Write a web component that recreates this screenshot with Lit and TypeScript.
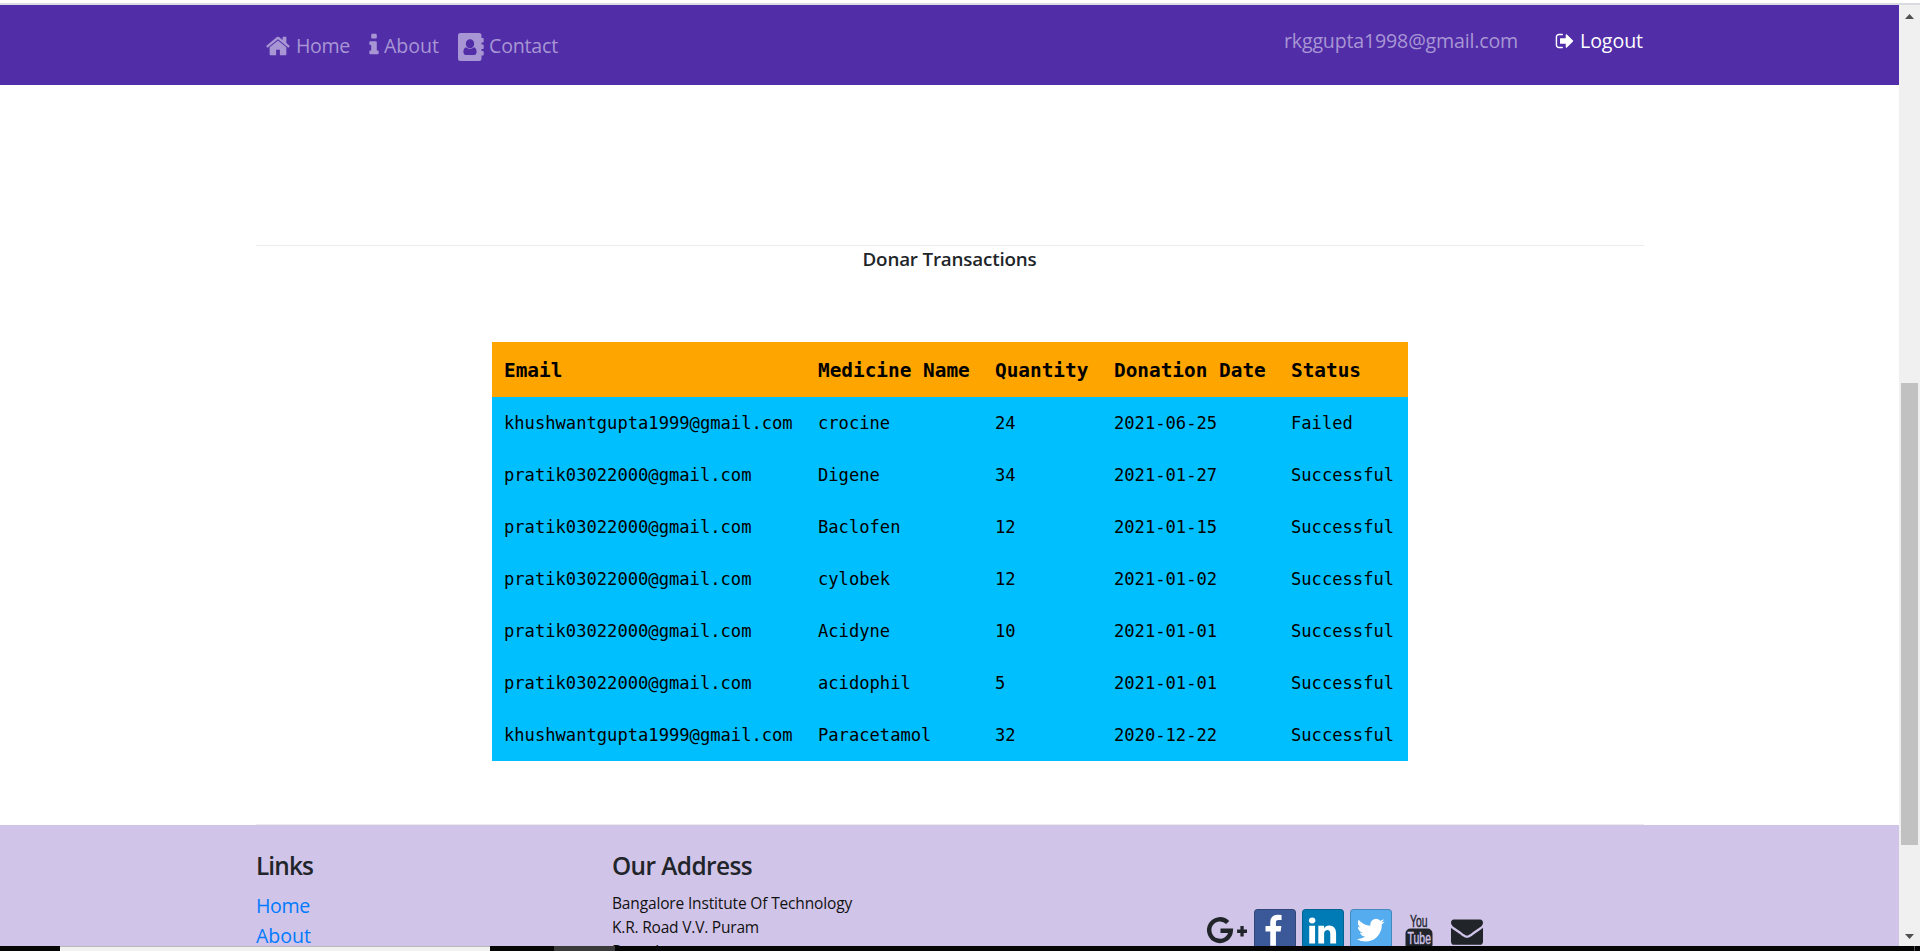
import { LitElement, html, css, svg } from "lit";
import { customElement, property } from "lit/decorators.js";

const HOME = "M1472 992v480q0 26-19 45t-45 19h-384v-384h-256v384h-384q-26 0-45-19t-19-45v-480q0-1 .5-3t.5-3l575-474 575 474q1 2 1 6zm223-69l-62 74q-8 9-21 11h-3q-13 0-21-7l-692-577-692 577q-12 8-24 7-13-2-21-11l-62-74q-8-10-7-23.5t11-21.5l719-599q32-26 76-26t76 26l244 204v-195q0-14 9-23t23-9h192q14 0 23 9t9 23v408l219 182q10 8 11 21.5t-7 23.5z";
const INFO = "M1216 1344v128q0 26-19 45t-45 19h-512q-26 0-45-19t-19-45v-128q0-26 19-45t45-19h64v-384h-64q-26 0-45-19t-19-45v-128q0-26 19-45t45-19h384q26 0 45 19t19 45v576h64q26 0 45 19t19 45zm-128-1152v192q0 26-19 45t-45 19h-256q-26 0-45-19t-19-45v-192q0-26 19-45t45-19h256q26 0 45 19t19 45z";
const SIGN_OUT = "M704 1440q0 4 1 20t.5 26.5-3 23.5-10 19.5-20.5 6.5h-320q-119 0-203.5-84.5t-84.5-203.5v-704q0-119 84.5-203.5t203.5-84.5h320q13 0 22.5 9.5t9.5 22.5q0 4 1 20t.5 26.5-3 23.5-10 19.5-20.5 6.5h-320q-66 0-113 47t-47 113v704q0 66 47 113t113 47h312l11.5 1 11.5 3 8 5.5 7 9 2 13.5zm928-544q0 26-19 45l-544 544q-19 19-45 19t-45-19-19-45v-288h-448q-26 0-45-19t-19-45v-384q0-26 19-45t45-19h448v-288q0-26 19-45t45-19 45 19l544 544q19 19 19 45z";
const ENVELOPE = "M1792 710v794q0 66-47 113t-113 47h-1472q-66 0-113-47t-47-113v-794q44 49 101 87 362 246 497 345 57 42 92.5 65.5t94.5 48 110 24.5h2q51 0 110-24.5t94.5-48 92.5-65.5q170-123 498-345 57-39 100-87zm0-294q0 79-49 151t-122 123q-376 261-468 325-10 7-42.5 31t-54 38.5-52 32.5-57.5 27-50 9h-2q-23 0-50-9t-57.5-27-52-32.5-54-38.5-42.5-31q-91-64-262-182.5t-205-142.5q-62-42-117-115.5t-55-136.5q0-78 41.5-130t118.5-52h1472q65 0 112.5 47t47.5 113z";
const TWITTER = "M1684 408q-67 98-162 167 1 14 1 42 0 130-38 259.5t-115.5 248.5-184.5 210.5-258 146-323 54.5q-271 0-496-145 35 4 78 4 225 0 401-138-105-2-188-64.5t-114-159.5q33 5 61 5 43 0 85-11-112-23-185.5-111.5t-73.5-205.5v-4q68 38 146 41-66-44-105-115t-39-154q0-88 44-163 121 149 294.5 238.5t371.5 99.5q-8-38-8-74 0-134 94.5-228.5t228.5-94.5q140 0 236 102 109-21 205-78-37 115-142 178 93-10 186-50z";
const FACEBOOK = "M1343 12v264h-157q-86 0-116 36t-30 108v189h293l-39 296h-254v759h-306v-759h-255v-296h255v-218q0-186 104-288.5t277-102.5q147 0 228 12z";
const LINKEDIN = "M477 625v991h-330v-991h330zm21-306q1 73-50.5 122t-135.5 49h-2q-82 0-132-49t-50-122q0-74 51.5-122.5t134.5-48.5 133 48.5 51 122.5zm1166 729v568h-329v-530q0-105-40.5-164.5t-126.5-59.5q-63 0-105.5 34.5t-63.5 85.5q-11 30-11 81v553h-329q2-399 2-647t-1-296l-1-48h329v144h-2q20-32 41-56t56.5-52 87-43.5 114.5-15.5q171 0 275 113.5t104 332.5z";

/** A line of text whose tracking is adjusted so it spans a set width. */
@customElement("fit-text")
export class FitText extends LitElement {
  @property() text = "";
  @property({ type: Number }) span = 0;

  static styles = css`
    :host { display: block; white-space: nowrap; }
    .line { display: inline-block; }
  `;

  updated() {
    const line = this.renderRoot.querySelector<HTMLElement>(".line");
    if (!line) return;
    line.style.letterSpacing = "0px";
    const gap = (this.span - line.getBoundingClientRect().width) / this.text.length;
    line.style.letterSpacing = gap.toFixed(3) + "px";
  }

  render() {
    return html`<span class="line">${this.text}</span>`;
  }
}

@customElement("site-nav")
export class SiteNav extends LitElement {
  static styles = css`
    :host { display: block; height: 80px; background: #512da8; color: #a896d4; font-size: 19.6px; line-height: 30px; }
    .inner { display: flex; width: 1388px; margin-left: 256px; }
    .item { display: flex; margin-top: 26px; height: 30px; }
    .item svg, .user svg { fill: currentColor; flex: none; }
    .home svg { width: 26px; height: 26px; margin: 2px 5px 0 9px; }
    .info svg { width: 26px; height: 26px; margin: 1px 0 0 11px; }
    .info fit-text { margin-left: -3px; }
    .contact svg { width: 26px; height: 28px; margin: 2px 5px 0 19px; }
    .user { display: flex; margin: 21px 1px 0 auto; height: 30px; }
    .logout { display: flex; color: #fff; margin-left: 37px; }
    .logout svg { width: 20px; height: 20px; margin: 5px 5px 0 0; }
  `;

  render() {
    return html`<nav class="inner">
      <div class="item home"><svg viewBox="0 0 1792 1792"><path d=${HOME} /></svg><fit-text text="Home" span="54"></fit-text></div>
      <div class="item info"><svg viewBox="0 0 1792 1792"><path d=${INFO} /></svg><fit-text text="About" span="55"></fit-text></div>
      <div class="item contact">
        <svg viewBox="0 0 26 28"><path fill-rule="evenodd" d="M2.500 0H21a2.500 2.500 0 0 1 2.500 2.500V5H25a.7.7 0 0 1 .7.7v3.100a.7.7 0 0 1-.7.7h-1.500v2H25a.7.7 0 0 1 .7.7v3.100a.7.7 0 0 1-.7.7h-1.500v2H25a.7.7 0 0 1 .7.7v3.100a.7.7 0 0 1-.7.7h-1.500V25.500A2.500 2.500 0 0 1 21 28H2.500A2.500 2.500 0 0 1 0 25.500v-23A2.500 2.500 0 0 1 2.500 0zM12 6.200a4.200 4.500 0 1 0 0 9a4.200 4.500 0 1 0 0-9zM8 14.300c-2 .5-2.800 3-2.600 5.200q.3 2.500 2.600 2.500h8q2.300 0 2.600-2.500c.2-2.200-.6-4.700-2.600-5.200q-4 3.600-8 0z" /></svg>
        <fit-text text="Contact" span="69"></fit-text></div>
      <div class="user">
        <fit-text text="rkggupta1998@gmail.com" span="234"></fit-text>
        <div class="logout"><svg viewBox="0 0 1792 1792"><path d=${SIGN_OUT} /></svg><fit-text text="Logout" span="63"></fit-text></div>
      </div>
    </nav>`;
  }
}

const ROWS = [
  ["khushwantgupta1999@gmail.com", "crocine", "24", "2021-06-25", "Failed"],
  ["pratik03022000@gmail.com", "Digene", "34", "2021-01-27", "Successful"],
  ["pratik03022000@gmail.com", "Baclofen", "12", "2021-01-15", "Successful"],
  ["pratik03022000@gmail.com", "cylobek", "12", "2021-01-02", "Successful"],
  ["pratik03022000@gmail.com", "Acidyne", "10", "2021-01-01", "Successful"],
  ["pratik03022000@gmail.com", "acidophil", "5", "2021-01-01", "Successful"],
  ["khushwantgupta1999@gmail.com", "Paracetamol", "32", "2020-12-22", "Successful"],
];

@customElement("donation-table")
export class DonationTable extends LitElement {
  static styles = css`
    :host { display: block; width: 916px; color: #000; font-family: "DejaVu Sans Mono", "Liberation Mono", monospace; }
    .row { display: grid; grid-template-columns: 314px 177px 119px 177px 1fr; padding-left: 12px; height: 52px; line-height: 52px; font-size: 17.140px; background: #00bfff; white-space: nowrap; }
    .head { height: 55px; line-height: 58px; font-size: 19.400px; font-weight: 700; background: #ffa500; }
  `;

  render() {
    return html`
      <div class="row head">${["Email", "Medicine Name", "Quantity", "Donation Date", "Status"].map((h) => html`<span>${h}</span>`)}</div>
      ${ROWS.map((r) => html`<div class="row">${r.map((c) => html`<span>${c}</span>`)}</div>`)}
    `;
  }
}

@customElement("site-footer")
export class SiteFooter extends LitElement {
  static styles = css`
    :host { display: block; height: 121px; overflow: hidden; background: #d1c4e9; color: #212529; }
    .inner { display: grid; grid-template-columns: 356px 593px 1fr; width: 1388px; margin-left: 256px; }
    .title { margin-top: 25px; height: 39px; line-height: 32px; font-size: 24.400px; font-weight: 600; }
    .link { height: 30px; line-height: 34px; font-size: 19.600px; color: #007bff; }
    .address { height: 24px; line-height: 29px; font-size: 15.500px; color: #111; }
    .social { display: flex; padding-top: 84px; height: 37px; }
    .social svg { flex: none; }
    .brand { box-sizing: border-box; width: 42px; height: 42px; border: 1px solid #0003; border-radius: 4px; fill: #fff; margin-right: 6px; display: block; }
    .facebook { background: #3b5998; margin-left: 7px; }
    .linkedin { background: #007bb6; }
    .twitter { background: #55acee; }
    .gplus { width: 42px; height: 42px; }
    .tube { width: 28px; height: 42px; margin-left: 7px; }
    .mail { width: 32px; height: 32px; margin: 6px 0 0 18px; fill: #212529; }
    .tubeword { font-family: "Liberation Sans", sans-serif; font-weight: 400; font-size: 17px; }
  `;

  render() {
    return html`<div class="inner">
      <div>
        <div class="title"><fit-text text="Links" span="57"></fit-text></div>
        <div class="link"><fit-text text="Home" span="54"></fit-text></div>
        <div class="link"><fit-text text="About" span="55"></fit-text></div>
      </div>
      <div>
        <div class="title"><fit-text text="Our Address" span="140"></fit-text></div>
        <div class="address"><fit-text text="Bangalore Institute Of Technology" span="240"></fit-text></div>
        <div class="address"><fit-text text="K.R. Road V.V. Puram" span="147"></fit-text></div>
        <div class="address"><fit-text text="Bangalore" span="70"></fit-text></div>
      </div>
      <div class="social">
        <svg class="gplus" viewBox="0 0 42 42">
          <path d="M22.700 13.500A10.800 10.800 0 1 0 25.800 21.700H15.500" fill="none" stroke="#212529" stroke-width="4.400" />
          <path d="M35.400 17h3.300v3.600h3.300v3.300h-3.300v3.600h-3.300v-3.600h-3.300v-3.300h3.300z" fill="#212529" />
        </svg>
        <svg class="brand facebook" viewBox="0 0 42 42"><g transform="translate(1.700 5) scale(.0195)"><path d=${FACEBOOK} /></g></svg>
        <svg class="brand linkedin" viewBox="0 0 42 42"><g transform="translate(3.800 5) scale(.0186)"><path d=${LINKEDIN} /></g></svg>
        <svg class="brand twitter" viewBox="0 0 42 42"><g transform="translate(4 4.500) scale(.0186)"><path d=${TWITTER} /></g></svg>
        <svg class="tube" viewBox="0 0 28 42">
          <rect x="0.500" y="19.500" width="27" height="21" rx="5" fill="#212529" />
          ${svg`<text class="tubeword" x="5" y="17.800" textLength="17.500" lengthAdjust="spacingAndGlyphs" fill="#212529" stroke="#212529" stroke-width=".4">You</text>
          <text class="tubeword" x="2.500" y="35" textLength="23.500" lengthAdjust="spacingAndGlyphs" fill="#d1c4e9" stroke="#d1c4e9" stroke-width=".4">Tube</text>`}
        </svg>
        <svg class="mail" viewBox="0 0 1792 1792"><path d=${ENVELOPE} /></svg>
      </div>
    </div>`;
  }
}

@customElement("app-root")
export class AppRoot extends LitElement {
  static styles = css`
    :host { display: flex; flex-direction: column; width: 1920px; height: 951px; overflow: hidden; background: #fff; font-family: "Open Sans", "Noto Sans", sans-serif; }
    .edge { height: 2px; margin-top: 3px; background: #dadbe0; flex: none; }
    .view { display: flex; height: 941px; }
    .page { width: 1899px; height: 941px; overflow: hidden; }
    .rule { width: 1388px; height: 1px; margin-left: 256px; background: #ececec; }
    .first { margin-top: 160px; }
    .heading { display: flex; justify-content: center; height: 96px; line-height: 26px; font-size: 18.800px; font-weight: 600; color: #212529; }
    donation-table { margin: 0 0 63px 492px; }
    .scroll { width: 21px; background: #f0f0f0; display: flex; flex-direction: column; align-items: center; justify-content: space-between; }
    .arrow { width: 9px; height: 5px; fill: #505050; display: block; }
    .up { margin-top: 9px; }
    .down { margin-bottom: 7px; }
    .track { flex: 1; padding-top: 364px; box-sizing: border-box; }
    .thumb { width: 17px; height: 462px; background: #c1c1c1; }
    .taskbar { display: flex; height: 5px; background: #060606; flex: none; }
    .search { box-sizing: border-box; width: 430px; margin-left: 60px; border-top: 1px solid #b9b9b9; background: #f2f2f2; }
    .active { width: 61px; margin-left: 64px; background: #3a3a3a; }
    .peek { width: 1px; margin-left: auto; margin-right: 5px; background: #555; }
  `;

  render() {
    return html`
      <div class="edge"></div>
      <div class="view">
        <main class="page">
          <site-nav></site-nav>
          <div class="rule first"></div>
          <div class="heading"><fit-text text="Donar Transactions" span="174"></fit-text></div>
          <donation-table></donation-table>
          <div class="rule"></div>
          <site-footer></site-footer>
        </main>
        <div class="scroll">
          <svg class="arrow up" viewBox="0 0 9 5"><path d="M0 5L4.500 0L9 5z" /></svg>
          <div class="track"><div class="thumb"></div></div>
          <svg class="arrow down" viewBox="0 0 9 5"><path d="M0 0L4.500 5L9 0z" /></svg>
        </div>
      </div>
      <div class="taskbar"><div class="search"></div><div class="active"></div><div class="peek"></div></div>
    `;
  }
}
